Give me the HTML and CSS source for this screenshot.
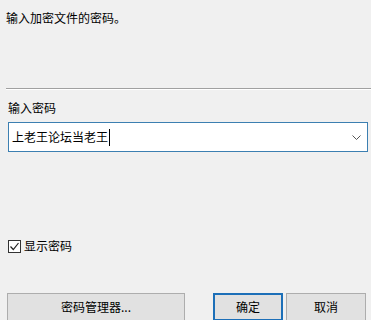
FILE: index.html
```html
<!DOCTYPE html>
<html lang="zh-CN">
<head>
<meta charset="utf-8">
<link rel="stylesheet" href="styles.css">
</head>
<body>
<div class="dialog">
  <p class="prompt">输入加密文件的密码。</p>
  <div class="divider"></div>
  <p class="label">输入密码</p>
  <div class="combo">
    <span class="value">上老王论坛当老王</span><span class="caret"></span>
    <svg class="chev" width="9" height="5" viewBox="0 0 9 5"><path d="M0.5 0.5 L4.5 4.5 L8.5 0.5" fill="none" stroke="#555" stroke-width="1"/></svg>
  </div>
  <label class="check">
    <span class="box"><svg width="11" height="11" viewBox="0 0 11 11"><path d="M1.5 5.5 L4.3 8.5 L9.5 2" fill="none" stroke="#222" stroke-width="1.2"/></svg></span>
    <span>显示密码</span>
  </label>
  <div class="buttons">
    <button class="btn wide">密码管理器...</button>
    <div class="right">
      <button class="btn default">确定</button>
      <button class="btn">取消</button>
    </div>
  </div>
</div>
</body>
</html>
```
FILE: styles.css
```css
html, body {
  margin: 0;
  padding: 0;
  background: #f0f0f0;
}
body {
  font-family: "Microsoft YaHei", "Noto Sans CJK SC", sans-serif;
  font-size: 12px;
  color: #000;
  width: 371px;
  height: 320px;
  overflow: hidden;
}
.dialog {
  display: flex;
  flex-direction: column;
}
.prompt {
  margin: 10px 0 0 6px;
  line-height: 16px;
}
.divider {
  margin: 62px 0 0 6px;
  height: 1px;
  background: #a0a0a0;
  border-bottom: 1px solid #ffffff;
}
.label {
  margin: 10px 0 0 8px;
  line-height: 16px;
}
.combo {
  margin: 6px 3px 0 8px;
  height: 28px;
  border: 1px solid #3c7fb1;
  background: #fff;
  display: flex;
  align-items: center;
  padding: 0 6px 0 3px;
}
.value {
  line-height: 16px;
}
.caret {
  width: 1px;
  height: 17px;
  background: #000;
  margin-left: 1px;
}
.chev {
  margin-left: auto;
}
.check {
  margin: 86px 0 0 8px;
  display: flex;
  align-items: center;
  gap: 3px;
  line-height: 16px;
}
.box {
  width: 11px;
  height: 11px;
  border: 1px solid #333;
  background: #fff;
  display: flex;
}
.buttons {
  margin: 39px 5px 0 7px;
  display: flex;
  justify-content: space-between;
}
.right {
  display: flex;
  gap: 3px;
}
.btn {
  font-family: inherit;
  font-size: 12px;
  height: 28px;
  background: #e1e1e1;
  border: 1px solid #adadad;
  padding: 0;
  color: #000;
  line-height: 16px;
}
.wide {
  width: 178px;
}
.default {
  width: 70px;
  border: 2px solid #1c6fb8;
}
.btn:not(.wide):not(.default) {
  width: 80px;
}
```
